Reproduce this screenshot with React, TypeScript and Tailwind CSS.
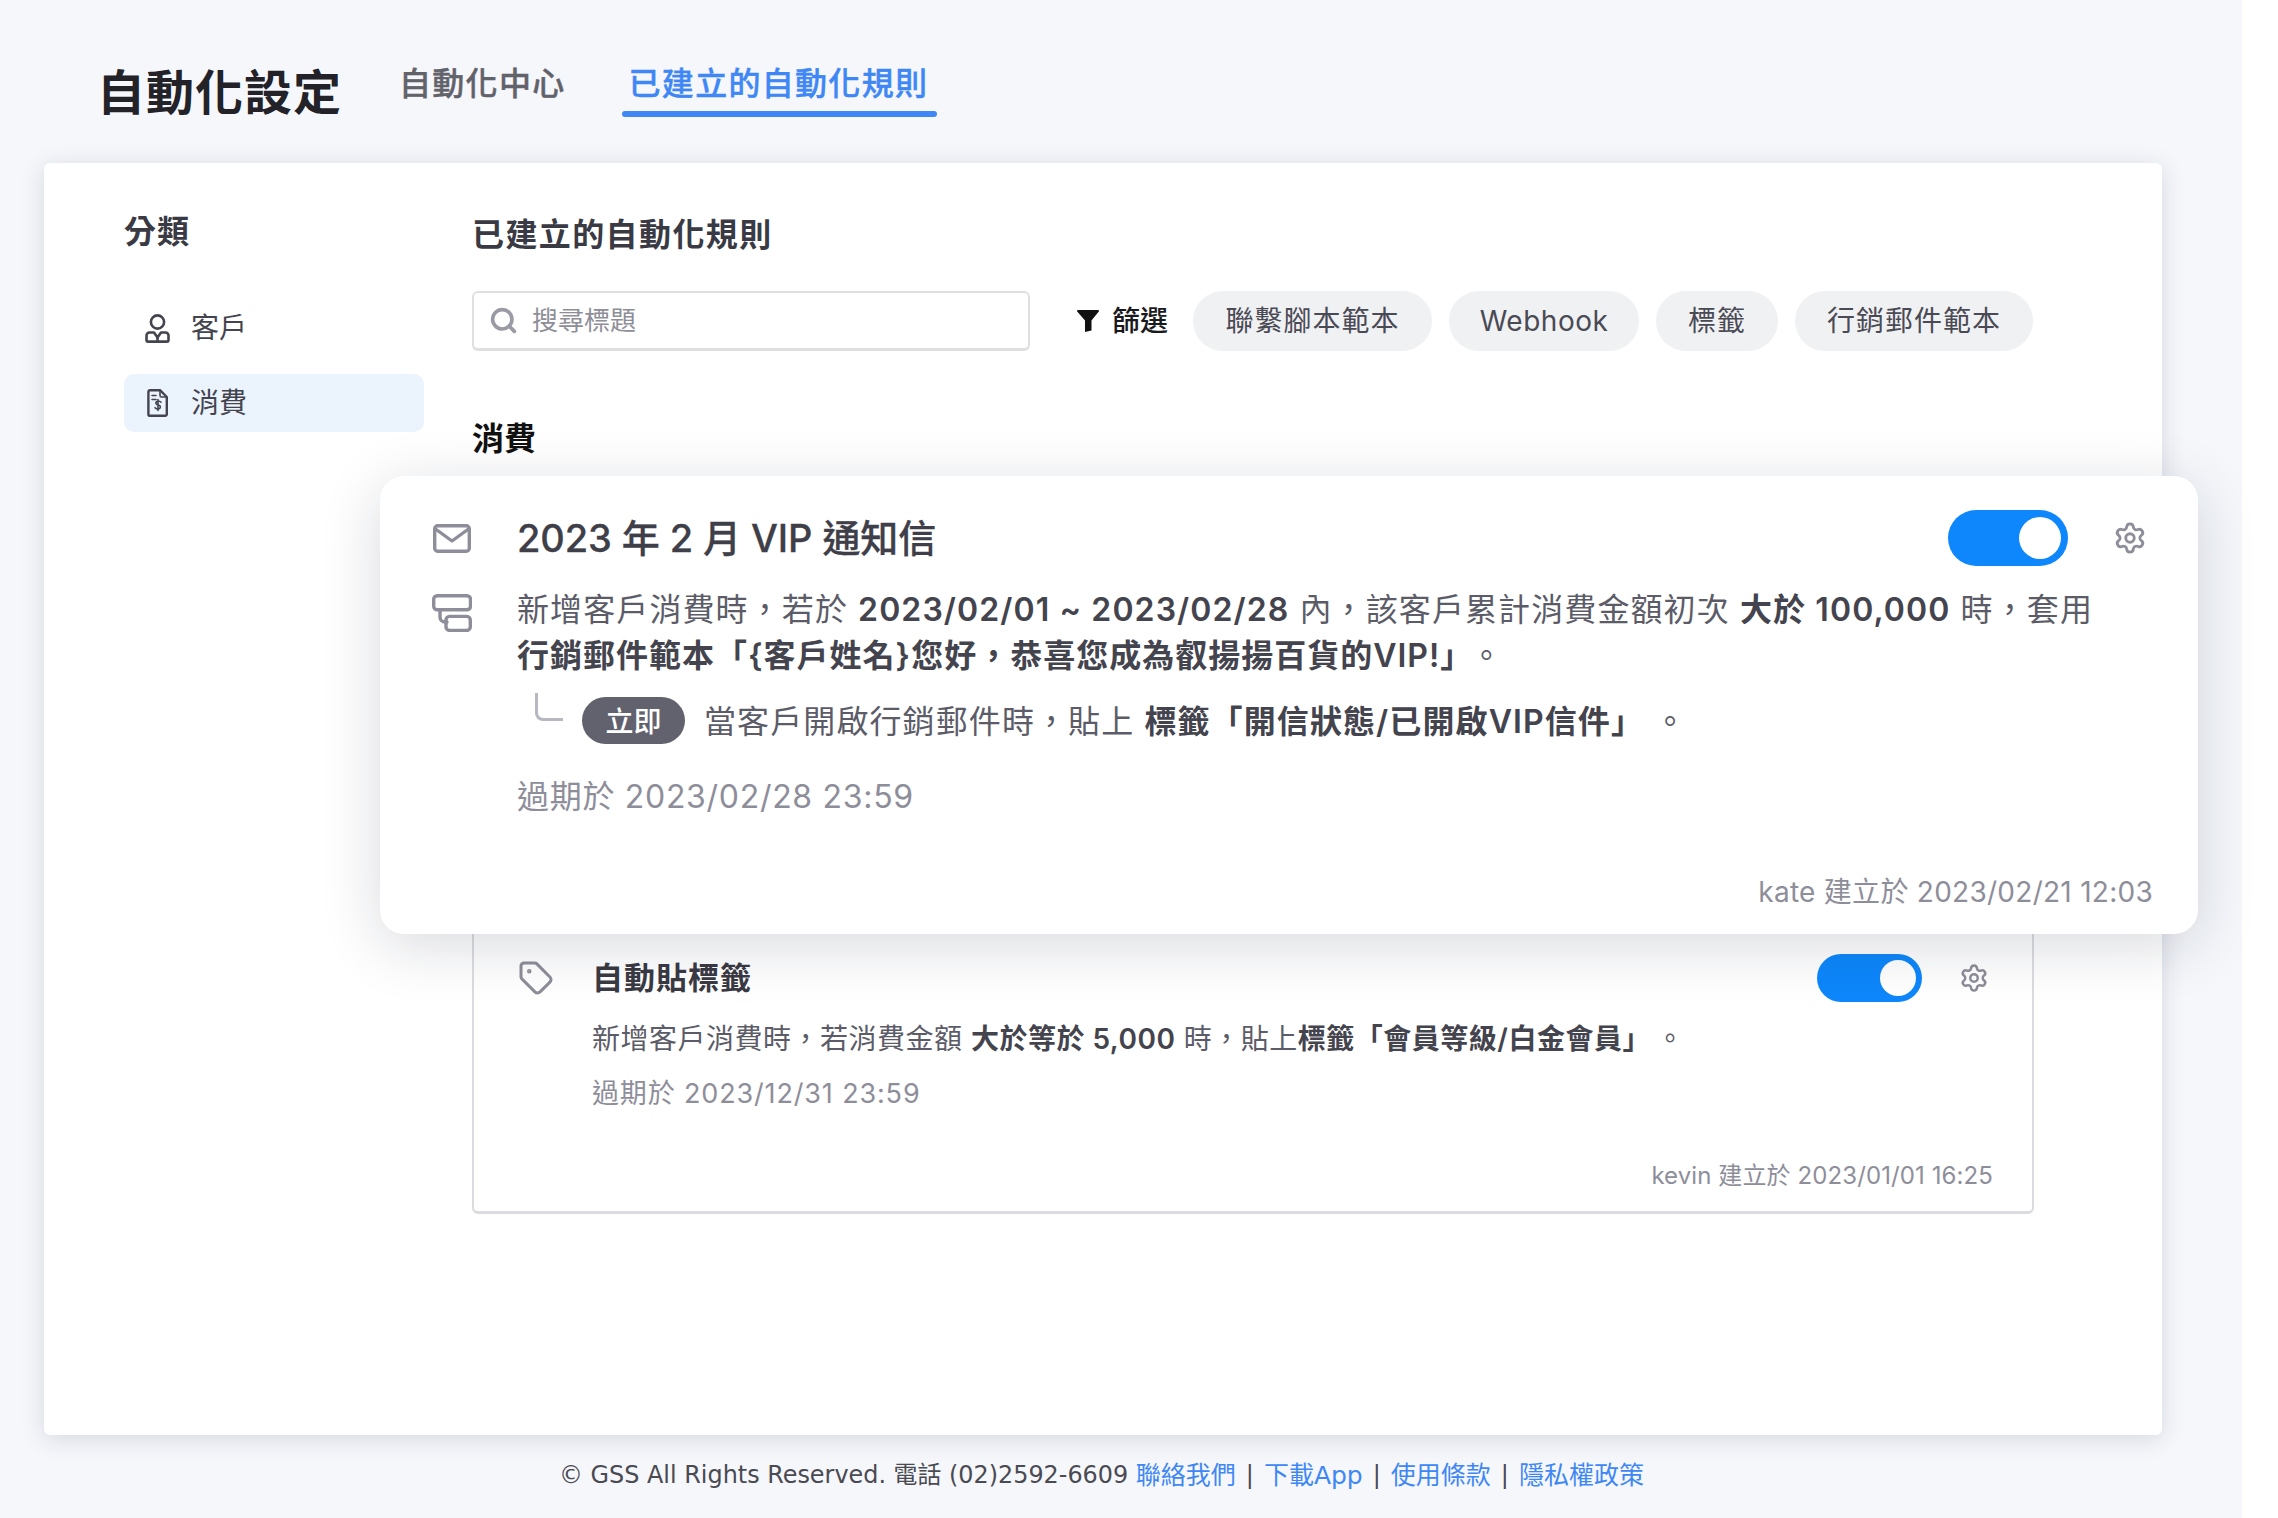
import { Search, Settings, Tag } from "lucide-react";

function Toggle({ big }: { big?: boolean }) {
  return big ? (
    <div className="flex h-[56px] w-[120px] shrink-0 items-center justify-end rounded-full bg-[#0d87fb] pr-[7px]">
      <div className="h-[42px] w-[42px] rounded-full bg-white" />
    </div>
  ) : (
    <div className="flex h-[48px] w-[105px] shrink-0 items-center justify-end rounded-full bg-[#0d87fb] pr-[6px]">
      <div className="h-[36px] w-[36px] rounded-full bg-white" />
    </div>
  );
}

function PersonIcon() {
  return (
    <svg width="25" height="29" viewBox="0 0 25 29" fill="none" stroke="#44444f" strokeWidth="2.6" strokeLinejoin="round" className="shrink-0">
      <circle cx="12.5" cy="8" r="6.6" />
      <path d="M4.5 18.5h4.5l3.5 5 3.5-5h4.5a3 3 0 0 1 3 3v4.5a1.6 1.6 0 0 1-1.6 1.6H3.1a1.6 1.6 0 0 1-1.6-1.6v-4.5a3 3 0 0 1 3-3z" />
      <path d="M12.5 23.5v4" />
    </svg>
  );
}

function BillIcon() {
  return (
    <svg width="21" height="28" viewBox="0 0 21 28" fill="none" stroke="#44444f" strokeWidth="2.4" strokeLinejoin="round" strokeLinecap="round" className="shrink-0">
      <path d="M3 1.2h10l6.8 6.8v17.2a1.6 1.6 0 0 1-1.6 1.6H3a1.6 1.6 0 0 1-1.6-1.6V2.8A1.6 1.6 0 0 1 3 1.2z" />
      <path d="M5 6.5h4M5 10.5h4M13 1.5v5a1.5 1.5 0 0 0 1.5 1.5h5" strokeWidth="1.6" />
      <path d="M14 13.2c-.8-1-3-1.4-4.2-.7-1.4.8-1.2 2.6.4 3.2l1.8.6c1.7.6 1.8 2.5.4 3.2-1.3.7-3.4.3-4.3-.8M11 10.5v11" strokeWidth="1.6" />
    </svg>
  );
}

function MailIcon() {
  return (
    <svg width="38" height="29" viewBox="0 0 38 29" fill="none" stroke="#8e8e9a" strokeWidth="3.4" strokeLinejoin="round" strokeLinecap="round">
      <rect x="1.7" y="1.7" width="34.6" height="25.6" rx="3" />
      <path d="M2.5 5l16.5 12L35.5 5" />
    </svg>
  );
}

function FlowIcon() {
  return (
    <svg width="40" height="38" viewBox="0 0 40 38" fill="none" stroke="#8e8e9a" strokeWidth="3.4" strokeLinejoin="round" strokeLinecap="round">
      <rect x="1.7" y="1.7" width="36.8" height="14" rx="3.5" />
      <path d="M8 16v7a5 5 0 0 0 5 5h2" />
      <rect x="14" y="22.4" width="24.3" height="14" rx="3.5" />
    </svg>
  );
}

function FunnelIcon() {
  return (
    <svg width="22" height="22" viewBox="0 0 22 22" fill="#111" className="shrink-0">
      <path d="M1 0h20a1 1 0 0 1 .8 1.6L14.5 10.5V20.5l-6.5 1.5V10.5L.2 1.6A1 1 0 0 1 1 0z" />
    </svg>
  );
}

export default function App() {
  const chip = "flex h-[60px] items-center justify-center whitespace-nowrap rounded-full bg-[#f0f1f3] text-[28px] text-[#4a4a55]";
  const strong = "font-semibold text-[#44444e]";
  return (
    <div className="flex h-[1518px] w-[2278px] overflow-hidden bg-white [font-family:Inter,'Noto_Sans_CJK_TC',sans-serif]">
      <div className="flex h-full w-[2242px] flex-col bg-[#f5f7fb] pl-[44px] pr-[80px]">
        <header className="flex h-[163px] shrink-0 items-start">
          <h1 className="ml-[53px] mt-[63px] whitespace-nowrap text-[48px] font-bold leading-[60px] tracking-[1px] text-[#222228]">自動化設定</h1>
          <div className="ml-[50px] mt-[62px] whitespace-nowrap px-[7px] text-[32px] font-medium leading-[44px] tracking-[1.3px] text-[#62626a] [-webkit-text-stroke:0.4px_#62626a]">自動化中心</div>
          <div className="ml-[49px] mt-[62px] flex flex-col">
            <div className="whitespace-nowrap px-[7px] text-[32px] font-medium leading-[44px] tracking-[1.3px] text-[#3f87f5] [-webkit-text-stroke:0.4px_#3f87f5]">已建立的自動化規則</div>
            <div className="mt-[5px] h-[6px] w-[315px] rounded-full bg-[#3f87f5]" />
          </div>
        </header>

        <main className="relative flex h-[1272px] shrink-0 rounded-[6px] bg-white shadow-[0_4px_24px_rgba(30,35,60,0.14)]">
          <aside className="w-[428px] shrink-0 pl-[80px] pt-[47px]">
            <div className="text-[32px] font-bold leading-[44px] tracking-[1px] text-[#3a3a44]">分類</div>
            <div className="mt-[45px] w-[300px]">
              <div className="flex h-[58px] items-center gap-[21px] pl-[21px] text-[28px] text-[#44444f]">
                <PersonIcon />
                <span>客戶</span>
              </div>
              <div className="mt-[17px] flex h-[58px] items-center gap-[23px] rounded-[10px] bg-[#ebf3fd] pl-[23px] text-[28px] text-[#44444f]">
                <BillIcon />
                <span>消費</span>
              </div>
            </div>
          </aside>

          <section className="w-[1562px] pt-[50px]">
            <h2 className="text-[32px] font-bold leading-[44px] tracking-[1.4px] text-[#3a3a44]">已建立的自動化規則</h2>
            <div className="mt-[34px] flex h-[60px] items-center">
              <div className="flex h-[60px] w-[558px] shrink-0 items-center rounded-[6px] border-2 border-b-[3px] border-[#dfdfe2] pl-[15px]">
                <Search size={29} strokeWidth={3} className="text-[#9a9aa4]" />
                <span className="ml-[14px] text-[26px] text-[#8e8e98]">搜尋標題</span>
              </div>
              <div className="ml-[47px] flex shrink-0 items-center gap-[13px] whitespace-nowrap text-[28px] font-medium text-[#1a1a1e]">
                <FunnelIcon />
                <span>篩選</span>
              </div>
              <div className="ml-[25px] flex shrink-0 gap-[17px]">
                <div className={`${chip} w-[239px] tracking-[1px]`}>聯繫腳本範本</div>
                <div className={`${chip} w-[190px] tracking-[0.5px]`}>Webhook</div>
                <div className={`${chip} w-[122px] tracking-[1px]`}>標籤</div>
                <div className={`${chip} w-[238px] tracking-[1px]`}>行銷郵件範本</div>
              </div>
            </div>
            <h3 className="mt-[66px] text-[32px] font-bold leading-[44px] text-[#111]">消費</h3>

            <div className="mt-[19px] h-[734px] rounded-[6px] border-2 border-b-[3px] border-[#dcdce0] pl-[44px] pr-[39px] pt-[472px]">
              <div className="flex h-[48px] items-center">
                <Tag size={36} strokeWidth={2} className="shrink-0 text-[#8e8e9a]" />
                <span className="ml-[38px] text-[31px] font-semibold tracking-[1px] text-[#3a3a44]">自動貼標籤</span>
                <div className="ml-auto mr-[4px] flex items-center gap-[37px]">
                  <Toggle />
                  <Settings size={30} strokeWidth={2} className="text-[#8e8e9a]" />
                </div>
              </div>
              <p className="ml-[74px] mt-[17px] text-[28px] leading-[40px] tracking-[0.5px] text-[#5c5c68]">
                新增客戶消費時，若消費金額 <b className={strong}>大於等於 5,000</b> 時，貼上<b className={strong}>標籤「會員等級/白金會員」</b><span className="ml-[19px]">。</span>
              </p>
              <p className="ml-[74px] mt-[15px] text-[27px] leading-[40px] tracking-[0.85px] text-[#8e8e9a]">過期於 2023/12/31 23:59</p>
              <p className="mt-[42px] text-right text-[24px] leading-[40px] tracking-[0.1px] text-[#8e8e9a]">kevin 建立於 2023/01/01 16:25</p>
            </div>
          </section>

          {/* expanded rule card floating above the list */}
          <div className="absolute left-[336px] top-[313px] flex h-[458px] w-[1818px] rounded-[24px] bg-white pl-[52px] pr-[45px] pt-[34px] shadow-[0_12px_60px_rgba(20,25,50,0.16)]">
            <div className="flex w-[40px] shrink-0 flex-col items-center">
              <div className="mt-[14px]">
                <MailIcon />
              </div>
              <div className="mt-[41px]">
                <FlowIcon />
              </div>
            </div>
            <div className="ml-[45px] flex-1">
              <div className="flex h-[56px] items-center">
                <span className="text-[38px] font-medium leading-[56px] tracking-[-0.1px] text-[#3f3f49] [-webkit-text-stroke:0.3px_#3f3f49]">2023 年 2 月 VIP 通知信</span>
                <div className="ml-auto mr-[6px] flex items-center gap-[45px]">
                  <Toggle big />
                  <Settings size={34} strokeWidth={2} className="text-[#8e8e9a]" />
                </div>
              </div>
              <p className="mt-[21px] w-[1600px] text-[32px] leading-[46px] tracking-[1.1px] text-[#5c5c68]">
                新增客戶消費時，若於 <b className={strong}>2023/02/01 ~ 2023/02/28</b> 內，該客戶累計消費金額初次 <b className={strong}>大於 100,000</b> 時，套用
                <br />
                <b className={`${strong} tracking-[1px]`}>行銷郵件範本「{"{"}客戶姓名{"}"}您好，恭喜您成為叡揚揚百貨的VIP!」</b><span className="ml-[13px]">。</span>
              </p>
              <div className="mt-[18px] flex h-[47px] items-center">
                <div className="mb-[28px] ml-[18px] h-[28px] w-[28px] shrink-0 rounded-bl-[8px] border-b-[3px] border-l-[3px] border-[#b8b8c2]" />
                <div className="ml-[19px] flex h-[47px] w-[103px] shrink-0 items-center justify-center rounded-full bg-[#62626e] pt-[2px] text-[28px] font-medium text-white">立即</div>
                <p className="ml-[19px] whitespace-nowrap pt-[2px] text-[32px] leading-[46px] tracking-[1.1px] text-[#5c5c68]">
                  當客戶開啟行銷郵件時，貼上 <b className={strong}>標籤「開信狀態/已開啟VIP信件」</b> 。
                </p>
              </div>
              <p className="mt-[30px] text-[32px] leading-[46px] tracking-[0.7px] text-[#8e8e9a]">過期於 2023/02/28 23:59</p>
              <p className="mt-[52px] text-right text-[28px] leading-[40px] tracking-[0.27px] text-[#8e8e9a]">kate 建立於 2023/02/21 12:03</p>
            </div>
          </div>
        </main>

        <footer className="flex h-[83px] shrink-0 items-center justify-center whitespace-nowrap pb-[2px] pr-[3px] text-[23.9px] text-[#4a4a52] [font-family:'DejaVu_Sans','Noto_Sans_CJK_TC',sans-serif]">
          <span>© GSS All Rights Reserved. 電話 (02)2592-6609&nbsp;</span>
          <span className="text-[25px] text-[#3f87f5]">聯絡我們</span>
          <span className="mx-[10px]">|</span>
          <span className="text-[25px] text-[#3f87f5]">下載App</span>
          <span className="mx-[10px]">|</span>
          <span className="text-[25px] text-[#3f87f5]">使用條款</span>
          <span className="mx-[10px]">|</span>
          <span className="text-[25px] text-[#3f87f5]">隱私權政策</span>
        </footer>
      </div>
    </div>
  );
}
